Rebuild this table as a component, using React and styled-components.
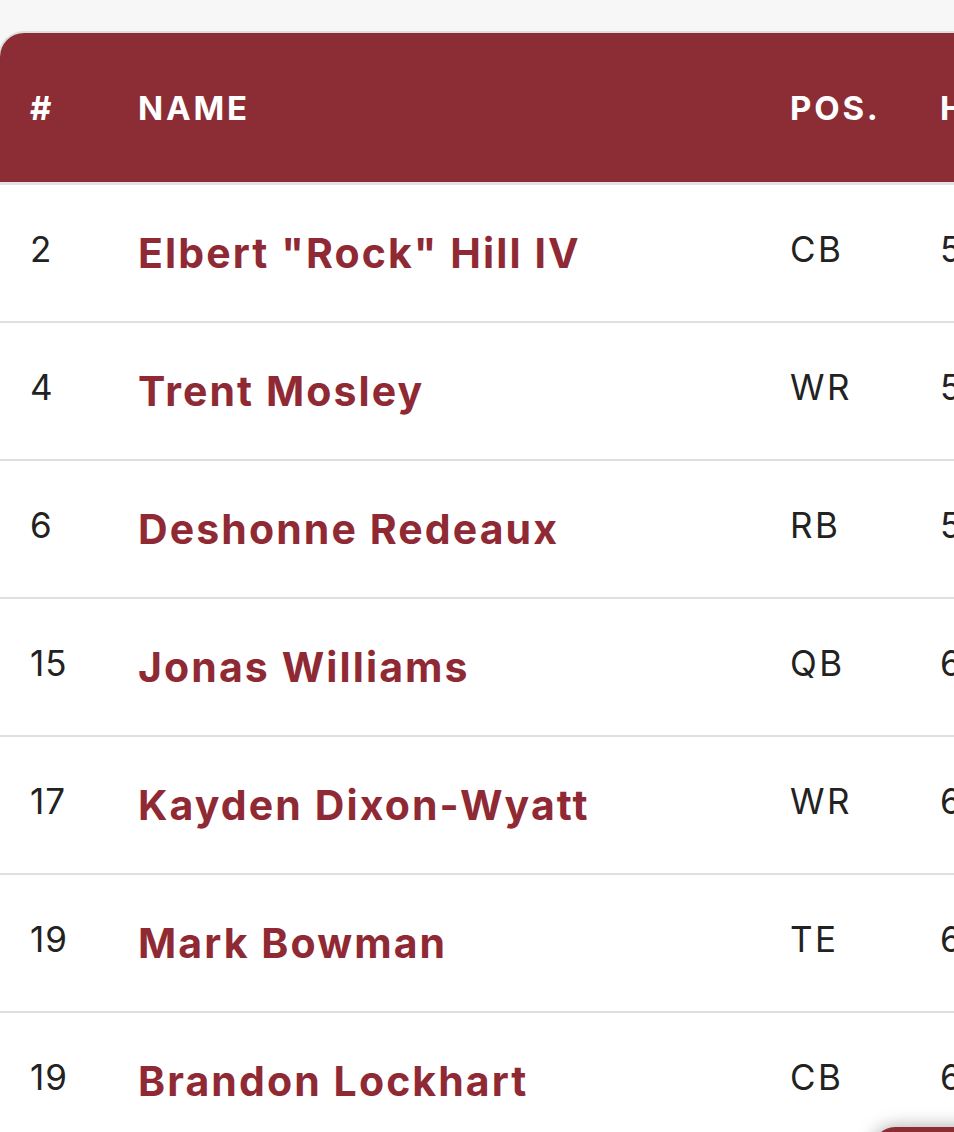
import React from "react";
import styled, { createGlobalStyle } from "styled-components";

const GlobalStyle = createGlobalStyle`
  html, body {
    margin: 0;
    padding: 0;
    background: #f7f7f7;
    overflow: hidden;
  }
  body {
    font-family: Inter, "DejaVu Sans", sans-serif;
    color: #222222;
  }
`;

const Page = styled.div`
  width: 954px;
  height: 1132px;
  padding-top: 31px;
  box-sizing: border-box;
  overflow: hidden;
  background: #f7f7f7;
`;

const Card = styled.div`
  width: 1200px;
  background: #ffffff;
  border-top: 2px solid #dedede;
  border-left: 2px solid #dedede;
  border-top-left-radius: 26px;
  overflow: hidden;
  margin-left: -2px;
`;

const Row = styled.div`
  display: grid;
  grid-template-columns: 138px 652px 150px 1fr;
  align-items: center;
  height: ${(props) => (props.$head ? "149px" : "136px")};
  background: ${(props) => (props.$head ? "#8c2d36" : "#ffffff")};
  border-bottom: ${(props) => (props.$head ? "3px solid #e3e3e3" : "2px solid #e0e0e0")};
`;

const HeadCell = styled.div`
  color: #ffffff;
  font-weight: 700;
  font-size: 33px;
  letter-spacing: 2.8px;
  padding-left: ${(props) => (props.$first ? "30px" : "0")};
  white-space: nowrap;
`;

const Cell = styled.div`
  font-size: 35px;
  font-weight: 400;
  color: #222222;
  letter-spacing: ${(props) => (props.$wide ? "2.5px" : "1px")};
  padding-left: ${(props) => (props.$first ? "30px" : "0")};
  padding-bottom: 8px;
  white-space: nowrap;
`;

const NameCell = styled.div`
  font-size: 41px;
  font-weight: 700;
  letter-spacing: 2.1px;
  color: #8f2a35;
  white-space: nowrap;
`;

const FloatTab = styled.div`
  position: fixed;
  left: 873px;
  top: 1127px;
  width: 200px;
  height: 80px;
  background: #8c2d36;
  border-top-left-radius: 22px;
  box-shadow: 0 0 18px rgba(0, 0, 0, 0.35);
`;

const players = [
  { num: "2", name: "Elbert \"Rock\" Hill IV", pos: "CB", ht: "5'10\"" },
  { num: "4", name: "Trent Mosley", pos: "WR", ht: "5'11\"" },
  { num: "6", name: "Deshonne Redeaux", pos: "RB", ht: "5'9\"" },
  { num: "15", name: "Jonas Williams", pos: "QB", ht: "6'2\"" },
  { num: "17", name: "Kayden Dixon-Wyatt", pos: "WR", ht: "6'1\"" },
  { num: "19", name: "Mark Bowman", pos: "TE", ht: "6'4\"" },
  { num: "19", name: "Brandon Lockhart", pos: "CB", ht: "6'0\"" },
];

const App = () => {
  return (
    <>
      <GlobalStyle />
      <Page>
        <Card>
          <Row $head>
            <HeadCell $first>#</HeadCell>
            <HeadCell>NAME</HeadCell>
            <HeadCell>POS.</HeadCell>
            <HeadCell>HT.</HeadCell>
          </Row>
          {players.map((p, i) => (
            <Row key={i}>
              <Cell $first>{p.num}</Cell>
              <NameCell>{p.name}</NameCell>
              <Cell $wide>{p.pos}</Cell>
              <Cell>{p.ht}</Cell>
            </Row>
          ))}
        </Card>
      </Page>
      <FloatTab />
    </>
  );
};

export default App;
